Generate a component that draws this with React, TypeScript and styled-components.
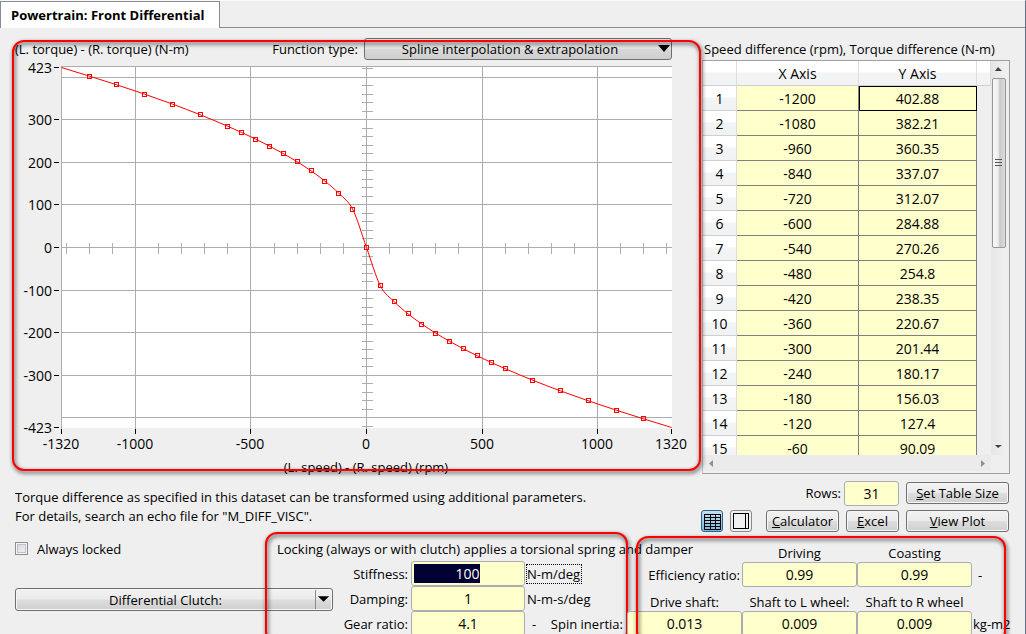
import React from 'react';
import styled, { createGlobalStyle } from 'styled-components';

const Global = createGlobalStyle`
  * { box-sizing: border-box; }
  html, body { margin: 0; overflow: hidden; background: #efefef; }
  body, button, input, select { font: 13px/18px "Open Sans", "Noto Sans", sans-serif; color: #000; }
`;

const Window = styled.div`
  min-height: 100vh;
  border-top: 1px solid #fafafa;
  border-right: 1px solid #5c7088;
  background: #efefef;
`;

const TabBar = styled.nav`
  display: flex;
  height: 27px;
  &::after { content: ''; flex: 1; border-bottom: 1px solid #898c95; }
`;

const Tab = styled.button`
  width: 220px;
  padding: 0 0 0 10px;
  border: 1px solid #898c95;
  border-bottom: 0;
  background: #fff;
  text-align: left;
  font-weight: 700;
  white-space: nowrap;
`;

const Upper = styled.main`
  display: grid;
  grid-template-columns: minmax(0, 1fr) 308px;
  column-gap: 7px;
  padding: 10px 15px 0;
`;

const Column = styled.section`
  display: flex;
  flex-direction: column;
  min-width: 0;
`;

const ChartPanel = styled.div`
  position: relative;
  height: 442px;
`;

const ChartHeader = styled.div`
  display: flex;
  align-items: center;
  height: 22px;
  margin-bottom: 2px;
  padding-right: 23px;
  white-space: nowrap;
`;

const FunctionLabel = styled.label`
  margin-left: auto;
  margin-right: 6px;
`;

const SelectBox = styled.span`
  position: relative;
  width: 308px;
  svg { position: absolute; right: 2px; top: 7px; pointer-events: none; }
`;

const Select = styled.select`
  appearance: none;
  width: 100%;
  height: 22px;
  display: block;
  padding: 0 32px 0 16px;
  border: 1px solid #707070;
  border-radius: 3px;
  background: linear-gradient(#f0f0f0, #e4e4e4 48%, #d8d8d8 52%, #cecece);
  text-align-last: center;
`;

const Chart = styled.svg`
  display: block;
  width: 100%;
  overflow: visible;
  .tick { font-size: 14px; }
`;

const Callout = styled.div<{ $inset: string }>`
  position: absolute;
  inset: ${p => p.$inset};
  border: 2px solid #f00;
  border-radius: 12px;
  filter: drop-shadow(1px 2px 2px rgba(0, 0, 0, 0.8));
  pointer-events: none;
`;

const Notes = styled.p`
  margin: 8px 0 0;
  line-height: 19px;
`;

const TableTitle = styled.h2`
  margin: 0 0 0 2px;
  height: 22px;
  font-size: 13px;
  font-weight: 400;
  line-height: 22px;
  white-space: nowrap;
`;

const TableFrame = styled.div`
  display: grid;
  grid-template-columns: minmax(0, 1fr) 15px;
  grid-template-rows: 394px 16px;
  height: 414px;
  padding-right: 3px;
  border: 1px solid #a0a0a0;
  border-left-color: #c8c8c8;
`;

const TableClip = styled.div`
  overflow: hidden;
  background: #efefef;
`;

const Table = styled.table`
  width: 100%;
  border-collapse: separate;
  border-spacing: 0;
  table-layout: fixed;
  text-align: center;
  font-size: 14px;
`;

const HeadCell = styled.th<{ $width?: number }>`
  width: ${p => (p.$width ? `${p.$width}px` : 'auto')};
  height: 25px;
  padding: 2px 0 0;
  border-right: 1px solid #dcdde0;
  border-bottom: 1px solid #d0d0d0;
  background: linear-gradient(#fff 45%, #f3f4f6 50%, #f1f2f4);
  font-weight: 400;
`;

const Cell = styled.td<{ $current?: boolean }>`
  height: 25px;
  padding: 2px 0 0;
  border-right: 1px solid #808080;
  border-bottom: 1px solid #808080;
  background: #ffffcc;
  outline: ${p => (p.$current ? '1px solid #000' : 'none')};
  outline-offset: -1px;
`;

const Filler = styled.td`
  padding: 0;
`;

const ScrollBar = styled.div<{ $across?: boolean }>`
  display: flex;
  flex-direction: ${p => (p.$across ? 'row' : 'column')};
  justify-content: space-between;
  align-items: center;
  padding: ${p => (p.$across ? '0 4px' : '0 0 4px')};
  background: ${p => (p.$across ? '#ebebeb' : 'linear-gradient(90deg, #e6e6e6, #f0f0f0)')};
`;

const ArrowSlot = styled.span`
  display: grid;
  place-items: center;
  height: 17px;
`;

const Thumb = styled.div`
  display: grid;
  place-items: center;
  width: 14px;
  height: 170px;
  margin-bottom: auto;
  border: 1px solid #979797;
  border-radius: 2px;
  background: linear-gradient(90deg, #f5f5f5 20%, #e6e6e8 50%, #c9c9cc 55%, #dcdcde);
`;

const ToolRow = styled.div<{ $top: number }>`
  display: flex;
  justify-content: flex-end;
  align-items: center;
  height: 24px;
  margin: ${p => p.$top}px 1px 0 -1px;
`;

const Button = styled.button<{ $width: number }>`
  width: ${p => p.$width}px;
  height: 22px;
  margin-left: 7px;
  padding: 0;
  border: 1px solid #707070;
  border-radius: 3px;
  background: linear-gradient(#f2f2f2, #ebebeb 48%, #dddddd 52%, #cfcfcf);
  box-shadow: inset 0 0 0 1px #f6f6f6;
  line-height: 20px;
  white-space: nowrap;
`;

const IconButton = styled.button<{ $on?: boolean }>`
  display: grid;
  place-items: end;
  width: 22px;
  height: 22px;
  margin-right: 7px;
  padding: 0 1px 1px 0;
  border: 1px solid ${p => (p.$on ? '#2c628b' : '#8a8a8a')};
  border-radius: 3px;
  background: ${p => (p.$on ? 'linear-gradient(#c5dfef, #a3cde6 50%, #78b5d8)' : '#f0f0f0')};
`;

const Spacer = styled.span`
  flex: 1;
`;

const Field = styled.input<{ $width: number }>`
  width: ${p => p.$width}px;
  height: 25px;
  padding: 0;
  border: 1px solid #abadb3;
  border-radius: 3px;
  background: #ffffcc;
  text-align: center;
  font-size: 14px;
`;

const Lower = styled.section`
  display: grid;
  grid-template-columns: minmax(0, 1fr) 398px;
  padding-left: 15px;
`;

const LockGrid = styled.div`
  position: relative;
  display: grid;
  grid-template-columns: minmax(0, 1fr) 56px 78px 114px 102px;
  grid-template-rows: 25px 25px 25px 25px;
  align-items: center;
  padding-top: 3px;
  white-space: nowrap;
`;

const CheckLabel = styled.label`
  display: flex;
  align-items: center;
  gap: 9px;
`;

const CheckBox = styled.input`
  appearance: none;
  width: 13px;
  height: 13px;
  margin: 0;
  border: 1px solid #8e8f8f;
  background: linear-gradient(135deg, #cfd3da, #f6f6f6);
  box-shadow: inset 0 0 0 1px #f4f4f4, inset 0 0 0 2px #bfc3c9;
`;

const LockHeading = styled.div`
  grid-column: 2 / -1;
`;

const FieldLabel = styled.label<{ $col?: number }>`
  grid-column: ${p => p.$col ?? 3};
  padding-right: 3px;
  text-align: right;
`;

const EfficiencyLabel = styled(FieldLabel)`
  justify-self: end;
  padding-right: 2px;
`;

const Unit = styled.span<{ $focus?: boolean }>`
  justify-self: start;
  margin-left: 1px;
  padding-right: 1px;
  border: 1px dotted ${p => (p.$focus ? '#000' : 'transparent')};
`;

const InertiaLabel = styled.div`
  display: flex;
  justify-content: space-between;
  padding: 0 4px 0 7px;
`;

const SplitButton = styled.button`
  grid-column: 1 / 3;
  grid-row: 3;
  align-self: end;
  display: flex;
  align-items: center;
  width: 100%;
  height: 23px;
  padding: 0;
  border: 1px solid #707070;
  border-radius: 3px;
  background: linear-gradient(#f2f2f2, #ebebeb 48%, #dddddd 52%, #cfcfcf);
  box-shadow: inset 0 0 0 1px #f6f6f6;
  span { flex: 1; }
  svg { width: 17px; height: 19px; border-left: 1px solid #8a8a8a; }
`;

const StiffnessBox = styled(Field)`
  background: linear-gradient(#000033, #000033) 2px 2px / 66px 19px no-repeat, #ffffcc;
  color: #fff;
  padding-right: 1px;
`;

const DriveGrid = styled.div`
  position: relative;
  display: grid;
  grid-template-columns: 115px 115px 115px minmax(0, 1fr);
  grid-template-rows: 20px 25px 24px 25px;
  align-items: center;
  justify-items: center;
  padding-top: 9px;
  white-space: nowrap;
`;

const Caption = styled.span<{ $col: number }>`
  grid-column: ${p => p.$col};
  padding-top: 2px;
`;

const ShaftLabel = styled.label<{ $col: number }>`
  grid-column: ${p => p.$col};
  padding-top: 5px;
`;

const DriveUnit = styled.span<{ $indent: number }>`
  justify-self: start;
  padding-left: ${p => p.$indent}px;
`;

const half: [number, string][] = [
  [1200, '402.88'], [1080, '382.21'], [960, '360.35'], [840, '337.07'], [720, '312.07'],
  [600, '284.88'], [540, '270.26'], [480, '254.8'], [420, '238.35'], [360, '220.67'],
  [300, '201.44'], [240, '180.17'], [180, '156.03'], [120, '127.4'], [60, '90.09'],
];

const OX = 351;
const OY = 185;
const sx = (v: number) => OX + Math.round(v * 0.2311);
const sy = (v: number) => OY - Math.round(v * 0.4255);

const samples: [number, number][] = [
  ...half.map(([x, y]) => [-x, Number(y)] as [number, number]),
  [0, 0],
  ...[...half].reverse().map(([x, y]) => [x, -Number(y)] as [number, number]),
];

const curvePath = (() => {
  const pts = ([[-1320, 423], ...samples, [1320, -423]] as [number, number][]).map(
    ([x, y]) => [OX + x * 0.2311, OY - y * 0.4255],
  );
  const slope = pts.map((_, i) => {
    const a = pts[Math.max(0, i - 1)];
    const b = pts[Math.min(pts.length - 1, i + 1)];
    return (b[1] - a[1]) / (b[0] - a[0]);
  });
  return pts.reduce((d, [x, y], i) => {
    if (i === 0) return `M${x} ${y}`;
    const [px, py] = pts[i - 1];
    const h = (x - px) / 3;
    return `${d}C${px + h} ${py + slope[i - 1] * h} ${x - h} ${y - slope[i] * h} ${x} ${y}`;
  }, '');
})();

const range = (from: number, to: number, step: number) =>
  Array.from({ length: Math.round((to - from) / step) + 1 }, (_, i) => from + i * step);

function TorqueChart() {
  const left = sx(-1320);
  const right = sx(1320);
  const top = sy(423) - 1;
  const bottom = sy(-423) + 1;
  return (
    <Chart viewBox="0 0 680 420" role="img" aria-label="Torque difference against speed difference">
      <rect x={left} y={top} width={right - left + 1} height={bottom - top} fill="#fff" />
      <g transform="translate(0.5 0.5)" stroke="#adadad" shapeRendering="crispEdges">
        <path d={`M${left} ${bottom}V${top}H${right}`} fill="none" />
        {[-1000, -500, 0, 500, 1000].map(v => <path key={v} d={`M${sx(v)} ${top}V${bottom}`} />)}
        {range(-400, 400, 100).map(v => <path key={v} d={`M${left} ${sy(v)}H${right}`} />)}
        {range(-420, 420, 20).map(v => <path key={v} d={`M${OX - 5} ${sy(v)}h11`} />)}
        {range(-1300, 1300, 100).map(v => <path key={v} d={`M${sx(v)} ${OY - 5}v11`} />)}
      </g>
      <g transform="translate(0.5 0.5)" fill="none" stroke="#f00">
        <path d={curvePath} />
        {samples.map(([x, y]) => (
          <rect key={x} x={sx(x) - 2} y={sy(y) - 2} width="4" height="4" shapeRendering="crispEdges" />
        ))}
      </g>
      {[423, 300, 200, 100, 0, -100, -200, -300, -423].map(v => (
        <g key={v}>
          <path d={`M${left - 7} ${sy(v) + 0.5}h5`} stroke="#000" shapeRendering="crispEdges" />
          <text className="tick" x={left - 9} y={sy(v) + 6} textAnchor="end">{v}</text>
        </g>
      ))}
      {[-1320, -1000, -500, 0, 500, 1000, 1320].map(v => (
        <g key={v}>
          <path d={`M${sx(v) + 0.5} ${bottom + 1}v5`} stroke="#000" shapeRendering="crispEdges" />
          <text className="tick" x={sx(v)} y={bottom + 21} textAnchor="middle">{v}</text>
        </g>
      ))}
      <text x={OX} y={bottom + 44} textAnchor="middle">(L. speed) - (R. speed) (rpm)</text>
    </Chart>
  );
}

function Arrow({ dir }: { dir: 'up' | 'down' | 'left' | 'right' }) {
  const shapes = { up: 'M1 6L4 2L8 6Z', down: 'M1 3L4 6L8 3Z', left: 'M6 1L2 4.500L6 8Z', right: 'M3 1L7 4.500L3 8Z' };
  const fill = dir === 'up' || dir === 'down' ? '#404040' : '#909090';
  return <svg width="9" height="9"><path d={shapes[dir]} fill={fill} /></svg>;
}

export default function App() {
  return (
    <>
      <Global />
      <Window>
        <TabBar><Tab>Powertrain: Front Differential</Tab></TabBar>
        <Upper>
          <Column>
            <ChartPanel>
              <ChartHeader>
                <span>(L. torque) - (R. torque) (N-m)</span>
                <FunctionLabel htmlFor="fn">Function type:</FunctionLabel>
                <SelectBox>
                  <Select id="fn"><option>Spline interpolation &amp; extrapolation</option></Select>
                  <svg width="12" height="7"><path d="M0 0H12L6 7Z" /></svg>
                </SelectBox>
              </ChartHeader>
              <TorqueChart />
              <Callout $inset="2px -6px 9px -3px" />
            </ChartPanel>
            <Notes>
              Torque difference as specified in this dataset can be transformed using additional parameters.
              <br />
              For details, search an echo file for "M_DIFF_VISC".
            </Notes>
          </Column>
          <Column>
            <TableTitle>Speed difference (rpm), Torque difference (N-m)</TableTitle>
            <TableFrame>
              <TableClip>
                <Table>
                  <thead>
                    <tr>
                      <HeadCell $width={34} />
                      <HeadCell $width={122}>X Axis</HeadCell>
                      <HeadCell $width={118}>Y Axis</HeadCell>
                      <HeadCell />
                    </tr>
                  </thead>
                  <tbody>
                    {half.map(([x, y], i) => (
                      <tr key={x}>
                        <HeadCell scope="row">{i + 1}</HeadCell>
                        <Cell>{-x}</Cell>
                        <Cell $current={i === 0}>{y}</Cell>
                        <Filler />
                      </tr>
                    ))}
                  </tbody>
                </Table>
              </TableClip>
              <ScrollBar>
                <ArrowSlot><Arrow dir="up" /></ArrowSlot>
                <Thumb>
                  <svg width="7" height="8"><path d="M0 .5h7M0 3.500h7M0 6.500h7" stroke="#555" /></svg>
                </Thumb>
                <Arrow dir="down" />
              </ScrollBar>
              <ScrollBar $across>
                <Arrow dir="left" />
                <Arrow dir="right" />
              </ScrollBar>
            </TableFrame>
            <ToolRow $top={7}>
              <FieldLabel htmlFor="rows">Rows:</FieldLabel>
              <Field id="rows" $width={55} defaultValue="31" />
              <Button $width={103}><u>S</u>et Table Size</Button>
            </ToolRow>
            <ToolRow $top={4}>
              <IconButton $on aria-label="Table view">
                <svg width="17" height="16" stroke="#000" fill="none" shapeRendering="crispEdges">
                  <path d="M.5 .5h16v15h-16zM0 3.500h17M0 6.500h17M0 9.500h17M0 12.500h17M6.500 0v16M11.500 0v16" />
                </svg>
              </IconButton>
              <IconButton aria-label="Panel view">
                <svg width="17" height="17" stroke="#000" fill="none" shapeRendering="crispEdges">
                  <path d="M.5 .5h15v15h-15zM12.500 .5v15" />
                </svg>
              </IconButton>
              <Spacer />
              <Button $width={73}><u>C</u>alculator</Button>
              <Button $width={53}><u>E</u>xcel</Button>
              <Button $width={103}><u>V</u>iew Plot</Button>
            </ToolRow>
          </Column>
        </Upper>
        <Lower>
          <LockGrid>
            <CheckLabel><CheckBox type="checkbox" />Always locked</CheckLabel>
            <LockHeading>Locking (always or with clutch) applies a torsional spring and damper</LockHeading>
            <FieldLabel htmlFor="stiff">Stiffness:</FieldLabel>
            <StiffnessBox id="stiff" $width={114} defaultValue="100" />
            <Unit $focus>N-m/deg</Unit>
            <SplitButton>
              <span>Differential Clutch:</span>
              <svg viewBox="0 0 17 19"><path d="M2 6H14L8 12Z" /></svg>
            </SplitButton>
            <FieldLabel htmlFor="damp">Damping:</FieldLabel>
            <Field id="damp" $width={114} defaultValue="1" />
            <Unit>N-m-s/deg</Unit>
            <FieldLabel htmlFor="gear">Gear ratio:</FieldLabel>
            <Field id="gear" $width={114} defaultValue="4.1" />
            <InertiaLabel><span>-</span><span>Spin inertia:</span></InertiaLabel>
            <Callout $inset="-1px -1px -8px 250px" />
          </LockGrid>
          <DriveGrid>
            <Caption $col={2}>Driving</Caption>
            <Caption $col={3}>Coasting</Caption>
            <EfficiencyLabel $col={1} htmlFor="eff">Efficiency ratio:</EfficiencyLabel>
            <Field id="eff" $width={115} defaultValue="0.99" />
            <Field aria-label="Coasting efficiency ratio" $width={115} defaultValue="0.99" />
            <DriveUnit $indent={6}>-</DriveUnit>
            <ShaftLabel $col={1} htmlFor="drive">Drive shaft:</ShaftLabel>
            <ShaftLabel $col={2} htmlFor="left">Shaft to L wheel:</ShaftLabel>
            <ShaftLabel $col={3} htmlFor="right">Shaft to R wheel</ShaftLabel>
            <Caption $col={4} />
            <Field id="drive" $width={115} defaultValue="0.013" />
            <Field id="left" $width={115} defaultValue="0.009" />
            <Field id="right" $width={115} defaultValue="0.009" />
            <DriveUnit $indent={1}>kg-m2</DriveUnit>
            <Callout $inset="3px 19px -8px 9px" />
          </DriveGrid>
        </Lower>
      </Window>
    </>
  );
}
